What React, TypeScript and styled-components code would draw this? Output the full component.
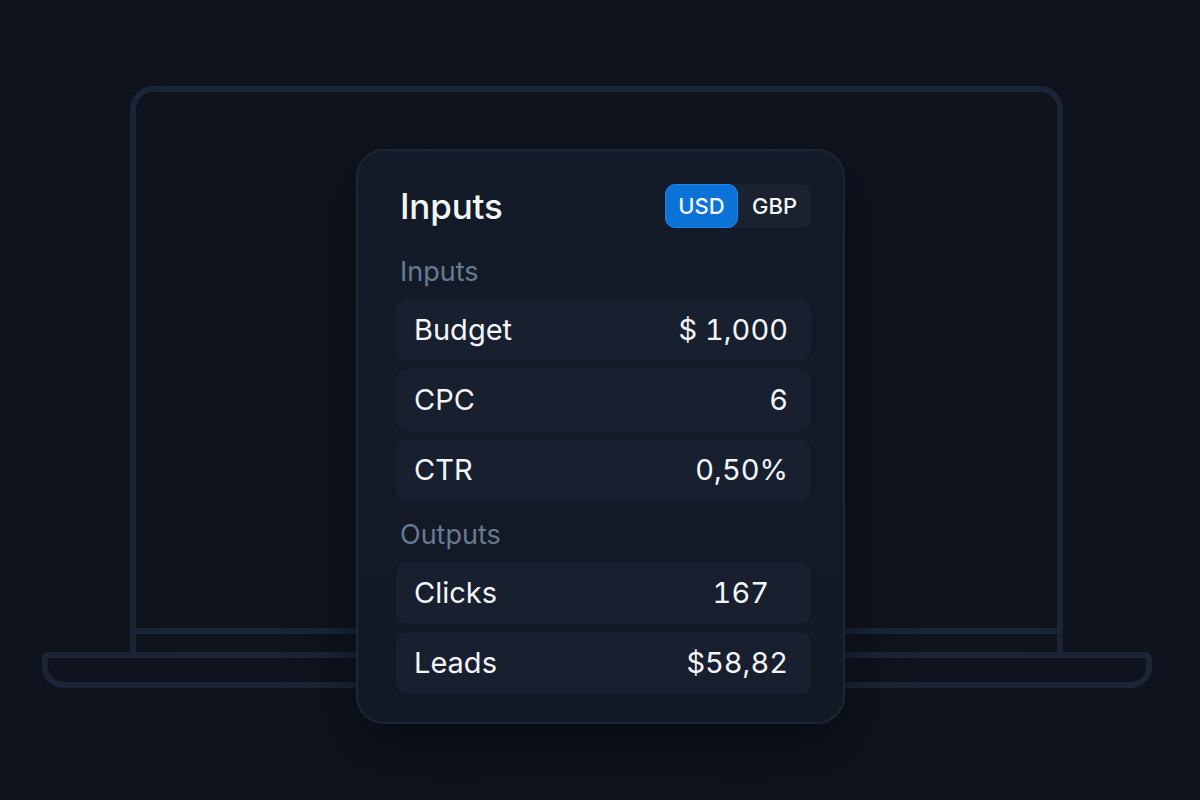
import React, { useState } from "react";
import styled, { createGlobalStyle } from "styled-components";

const GlobalStyle = createGlobalStyle`
  html, body {
    margin: 0;
    padding: 0;
    background: #0e131d;
  }
  body {
    font-family: Inter, "Noto Sans", "Liberation Sans", sans-serif;
    -webkit-font-smoothing: antialiased;
  }
`;

const Stage = styled.main`
  position: relative;
  width: 1200px;
  height: 800px;
  overflow: hidden;
  display: flex;
  justify-content: center;
  align-items: flex-start;
  padding-top: 149px;
  box-sizing: border-box;
  background: radial-gradient(circle at 50% 45%, #10151f 0%, #0e131d 70%);
`;

const LaptopArt = styled.svg`
  position: absolute;
  inset: 0;
  pointer-events: none;
`;

const Card = styled.section`
  position: relative;
  width: 489px;
  margin-left: 1px;
  box-sizing: border-box;
  padding: 33px 32px 28px 38px;
  border-radius: 28px;
  border: 2px solid #1d2636;
  background: linear-gradient(180deg, #141b28 0%, #121824 100%);
  box-shadow: 0 20px 60px rgba(3, 6, 12, 0.55);
  display: flex;
  flex-direction: column;
`;

const Header = styled.header`
  display: flex;
  align-items: center;
  justify-content: space-between;
  height: 44px;
  margin-bottom: 29px;
`;

const Title = styled.h1`
  margin: 0;
  padding-left: 4px;
  font-size: 35px;
  line-height: 44px;
  font-weight: 500;
  letter-spacing: -0.2px;
  color: #f3f5f8;
`;

const Toggle = styled.div`
  display: flex;
  height: 44px;
  border-radius: 10px;
  background: #1a2230;
`;

const ToggleButton = styled.button<{ $active: boolean }>`
  width: 73px;
  height: 44px;
  border: 1px solid ${({ $active }) => ($active ? "#1c86f0" : "transparent")};
  border-radius: 10px;
  background: ${({ $active }) => ($active ? "#0b72d8" : "transparent")};
  color: #f4f7fb;
  font-family: inherit;
  font-size: 22px;
  font-weight: 500;
  cursor: pointer;
  padding: 0;
`;

const SectionLabel = styled.h2<{ $spaced?: boolean }>`
  margin: ${({ $spaced }) => ($spaced ? "19px" : "0")} 0 13px;
  padding-left: 4px;
  font-size: 27px;
  line-height: 29px;
  font-weight: 400;
  color: #667a93;
`;

const RowList = styled.div`
  display: flex;
  flex-direction: column;
  gap: 8px;
`;

const Row = styled.div`
  display: flex;
  align-items: center;
  justify-content: space-between;
  height: 62px;
  padding: 0 23px 0 18px;
  border-radius: 12px;
  background: #182030;
  font-size: 29px;
  line-height: 62px;
  color: #f3f5f8;
`;

const RowValue = styled.span<{ $inset?: number }>`
  margin-right: ${({ $inset }) => $inset ?? 0}px;
  font-variant-numeric: tabular-nums;
`;

type Field = { label: string; value: string; inset?: number };

const inputs: Field[] = [
  { label: "Budget", value: "$ 1,000" },
  { label: "CPC", value: "6" },
  { label: "CTR", value: "0,50%" },
];

const outputs: Field[] = [
  { label: "Clicks", value: "167", inset: 19 },
  { label: "Leads", value: "$58,82" },
];

const Laptop = (): JSX.Element => (
  <LaptopArt width="1200" height="800" viewBox="0 0 1200 800" fill="none">
    <g stroke="#1b2535" strokeWidth="6" strokeLinejoin="round">
      {/* screen lid */}
      <path d="M133 655 V109 A20 20 0 0 1 153 89 H1040 A20 20 0 0 1 1060 109 V655" />
      {/* bezel line */}
      <path d="M133 631 H1060" />
      {/* base */}
      <path d="M48 655 H1146 A3 3 0 0 1 1149 658 V667 A18 18 0 0 1 1131 685 H63 A18 18 0 0 1 45 667 V658 A3 3 0 0 1 48 655 Z" />
    </g>
  </LaptopArt>
);

const FieldRows = ({ items }: { items: Field[] }): JSX.Element => (
  <RowList>
    {items.map((f) => (
      <Row key={f.label}>
        <span>{f.label}</span>
        <RowValue $inset={f.inset}>{f.value}</RowValue>
      </Row>
    ))}
  </RowList>
);

export default function App(): JSX.Element {
  const [currency, setCurrency] = useState<"USD" | "GBP">("USD");

  return (
    <>
      <GlobalStyle />
      <Stage>
        <Laptop />
        <Card>
          <Header>
            <Title>Inputs</Title>
            <Toggle>
              {(["USD", "GBP"] as const).map((c) => (
                <ToggleButton key={c} $active={currency === c} onClick={(): void => setCurrency(c)}>
                  {c}
                </ToggleButton>
              ))}
            </Toggle>
          </Header>
          <SectionLabel>Inputs</SectionLabel>
          <FieldRows items={inputs} />
          <SectionLabel $spaced>Outputs</SectionLabel>
          <FieldRows items={outputs} />
        </Card>
      </Stage>
    </>
  );
}
